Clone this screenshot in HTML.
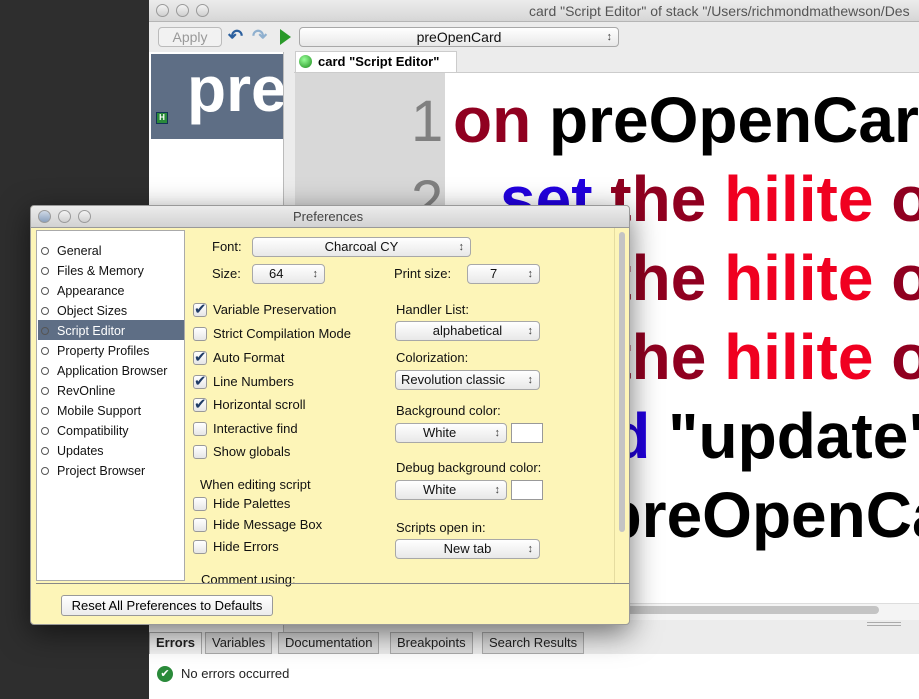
<!DOCTYPE html>
<html><head><style>
*{margin:0;padding:0;box-sizing:border-box}
body{width:919px;height:699px;overflow:hidden;background:#2e2e2e;font-family:"Liberation Sans",sans-serif;font-size:13px;position:relative}
.abs{position:absolute}
.light{width:13px;height:13px;border-radius:50%;border:1px solid #9a9a9a;background:linear-gradient(#f4f4f4,#cfcfcf);position:absolute}
.code{position:absolute;font-weight:bold;font-size:64px;white-space:nowrap;font-family:"Liberation Sans",sans-serif}
.pop{position:absolute;height:20px;border:1px solid #a8a8a8;border-radius:4px;background:linear-gradient(#fff,#e8e8e8);font-size:13px;line-height:18px;text-align:center;color:#111}
.pop:after{content:"\2195";position:absolute;right:6px;top:0;font-size:11px;color:#444}
.cb{position:absolute;width:14px;height:14px;border:1px solid #999;border-radius:3px;background:linear-gradient(#fff,#e6e6e6)}
.cb.on:after{content:"\2714";position:absolute;left:0;top:-4px;font-size:15px;color:#1f3c66}
.lbl{position:absolute;font-size:13px;color:#111;white-space:nowrap}
.li{position:absolute;left:2px;font-size:12.5px;color:#111;white-space:nowrap}
.li:before{content:"";display:inline-block;width:6px;height:6px;border:1px solid #555;border-radius:50%;margin:0 8px 1px 2px;vertical-align:middle}
.tab{position:absolute;top:632px;height:22px;border:1px solid #aaa;background:#dcdcdc;font-size:13px;line-height:20px;padding:0 6px;color:#222}
</style></head><body>
<div class="abs" style="left:149px;top:0;width:770px;height:699px;background:#ececec;overflow:hidden">
 <div class="abs" style="left:0;top:0;width:770px;height:22px;background:linear-gradient(#ececec,#d6d6d6);border-bottom:1px solid #b5b5b5"></div>
 <div class="light" style="left:7px;top:4px"></div><div class="light" style="left:27px;top:4px"></div><div class="light" style="left:47px;top:4px"></div>
 <div class="abs" style="left:380px;top:3px;font-size:14px;color:#555;white-space:nowrap">card "Script Editor" of stack "/Users/richmondmathewson/Des</div>
 <div class="abs" style="left:9px;top:27px;width:64px;height:20px;border:1px solid #bbb;border-radius:4px;background:#f2f2f2;color:#999;text-align:center;line-height:18px;font-size:14px">Apply</div>
 <div class="abs" style="left:79px;top:26px;font-size:18px;color:#2b5f9e;font-weight:bold">&#x21B6;</div>
 <div class="abs" style="left:103px;top:26px;font-size:18px;color:#8fb0cf;font-weight:bold">&#x21B7;</div>
 <div class="abs" style="left:131px;top:29px;width:0;height:0;border-left:11px solid #2a9a2a;border-top:8px solid transparent;border-bottom:8px solid transparent"></div>
 <div class="pop" style="left:150px;top:27px;width:320px;font-size:14px">preOpenCard</div>
 <div class="abs" style="left:0;top:52px;width:135px;height:580px;background:#fff;border-right:1px solid #bbb"></div>
 <div class="abs" style="left:2px;top:54px;width:132px;height:85px;background:#5e6e85;overflow:hidden">
  <div class="abs" style="left:5px;top:58px;width:12px;height:12px;background:#2a8a3a;border:1px solid #135;color:#fff;font-size:8px;font-weight:bold;text-align:center;line-height:10px">H</div>
  <div class="abs" style="left:36px;top:-2px;font-size:64px;font-weight:bold;color:#fff">pre</div>
 </div>
 <div class="abs" style="left:145px;top:51px;width:625px;height:22px;background:#ececec;border-bottom:1px solid #ccc"></div>
 <div class="abs" style="left:146px;top:51px;width:162px;height:22px;background:#fff;border:1px solid #ccc;font-weight:bold;font-size:13px;line-height:20px;padding-left:22px">card "Script Editor"</div>
 <div class="abs" style="left:150px;top:55px;width:13px;height:13px;border-radius:50%;background:radial-gradient(circle at 40% 35%,#9f9,#1a8a1a)"></div>
 <div class="abs" style="left:146px;top:73px;width:150px;height:530px;background:#d8d8d8"></div>
 <div class="abs" style="left:296px;top:73px;width:474px;height:530px;background:#fff"></div>
 <div class="abs" style="left:262px;top:88px;font-size:58px;color:#808080">1</div>
 <div class="abs" style="left:262px;top:168px;font-size:58px;color:#808080">2</div>
 <div class="code" style="left:304px;top:83px"><span style="color:#900020">on</span> <span style="color:#000">preOpenCard</span></div>
 <div class="code" style="left:351px;top:162px"><span style="color:#2200e0">set</span> <span style="color:#900020">the</span> <span style="color:#f00020">hilite</span> <span style="color:#900020">of</span></div>
 <div class="code" style="left:351px;top:241px"><span style="color:#2200e0">set</span> <span style="color:#900020">the</span> <span style="color:#f00020">hilite</span> <span style="color:#900020">of</span></div>
 <div class="code" style="left:351px;top:320px"><span style="color:#2200e0">set</span> <span style="color:#900020">the</span> <span style="color:#f00020">hilite</span> <span style="color:#900020">of</span></div>
 <div class="code" style="left:352px;top:399px"><span style="color:#2200e0">send</span> <span style="color:#000">"update"</span></div>
 <div class="code" style="left:322px;top:478px;color:#000">end preOpenCard</div>
 <div class="abs" style="left:146px;top:603px;width:624px;height:17px;background:#f4f4f4;border-top:1px solid #ddd"></div>
 <div class="abs" style="left:290px;top:606px;width:440px;height:8px;border-radius:4px;background:#c4c4c4"></div>
 <div class="abs" style="left:718px;top:622px;width:34px;height:4px;border-top:1px solid #aaa;border-bottom:1px solid #aaa"></div>
 <div class="abs" style="left:0;top:654px;width:770px;height:45px;background:#fff"></div>
</div>
<div class="tab" style="left:149px;background:#f2f2f2;font-weight:bold;border-bottom:none">Errors</div>
<div class="tab" style="left:205px">Variables</div>
<div class="tab" style="left:278px">Documentation</div>
<div class="tab" style="left:390px">Breakpoints</div>
<div class="tab" style="left:482px">Search Results</div>
<div class="abs" style="left:157px;top:666px;width:16px;height:16px;border-radius:50%;background:#2a8a3a;color:#fff;font-size:11px;text-align:center;line-height:16px">&#x2714;</div>
<div class="abs" style="left:181px;top:666px;font-size:13px;color:#222">No errors occurred</div>
<div class="abs" style="left:30px;top:205px;width:600px;height:420px;background:#fdf5b8;border:1px solid #999;border-radius:4px;box-shadow:0 8px 30px rgba(0,0,0,.55);overflow:hidden">
 <div class="abs" style="left:0;top:0;width:600px;height:22px;background:linear-gradient(#ececec,#d2d2d2);border-bottom:1px solid #999"></div>
 <div class="light" style="left:7px;top:4px;background:linear-gradient(#cfd9e6,#8aa0bd)"></div><div class="light" style="left:27px;top:4px"></div><div class="light" style="left:47px;top:4px"></div>
 <div class="abs" style="left:262px;top:3px;font-size:13px;color:#444">Preferences</div>
 <div class="abs" style="left:5px;top:24px;width:149px;height:351px;background:#fff;border:1px solid #aaa">
  <div class="li" style="top:13px">General</div>
  <div class="li" style="top:33px">Files &amp; Memory</div>
  <div class="li" style="top:53px">Appearance</div>
  <div class="li" style="top:73px">Object Sizes</div>
  <div class="abs" style="left:1px;top:89px;width:146px;height:20px;background:#5e6e85"></div>
  <div class="li" style="top:93px;color:#fff">Script Editor</div>
  <div class="li" style="top:113px">Property Profiles</div>
  <div class="li" style="top:133px">Application Browser</div>
  <div class="li" style="top:153px">RevOnline</div>
  <div class="li" style="top:173px">Mobile Support</div>
  <div class="li" style="top:193px">Compatibility</div>
  <div class="li" style="top:213px">Updates</div>
  <div class="li" style="top:233px">Project Browser</div>
 </div>
 <div class="lbl" style="left:181px;top:33px">Font:</div>
 <div class="pop" style="left:221px;top:31px;width:219px">Charcoal CY</div>
 <div class="lbl" style="left:181px;top:60px">Size:</div>
 <div class="pop" style="left:221px;top:58px;width:73px;text-align:left;padding-left:16px">64</div>
 <div class="lbl" style="left:363px;top:60px">Print size:</div>
 <div class="pop" style="left:436px;top:58px;width:73px;text-align:left;padding-left:22px">7</div>
 <div class="cb on" style="left:162px;top:97px"></div><div class="lbl" style="left:182px;top:96px">Variable Preservation</div>
 <div class="cb" style="left:162px;top:121px"></div><div class="lbl" style="left:182px;top:120px">Strict Compilation Mode</div>
 <div class="cb on" style="left:162px;top:145px"></div><div class="lbl" style="left:182px;top:144px">Auto Format</div>
 <div class="cb on" style="left:162px;top:169px"></div><div class="lbl" style="left:182px;top:168px">Line Numbers</div>
 <div class="cb on" style="left:162px;top:192px"></div><div class="lbl" style="left:182px;top:191px">Horizontal scroll</div>
 <div class="cb" style="left:162px;top:216px"></div><div class="lbl" style="left:182px;top:215px">Interactive find</div>
 <div class="cb" style="left:162px;top:239px"></div><div class="lbl" style="left:182px;top:238px">Show globals</div>
 <div class="lbl" style="left:169px;top:271px">When editing script</div>
 <div class="cb" style="left:162px;top:291px"></div><div class="lbl" style="left:182px;top:290px">Hide Palettes</div>
 <div class="cb" style="left:162px;top:312px"></div><div class="lbl" style="left:182px;top:311px">Hide Message Box</div>
 <div class="cb" style="left:162px;top:334px"></div><div class="lbl" style="left:182px;top:333px">Hide Errors</div>
 <div class="lbl" style="left:170px;top:366px">Comment using:</div>
 <div class="lbl" style="left:365px;top:96px">Handler List:</div>
 <div class="pop" style="left:364px;top:115px;width:145px">alphabetical</div>
 <div class="lbl" style="left:365px;top:144px">Colorization:</div>
 <div class="pop" style="left:364px;top:164px;width:145px;text-align:left;padding-left:5px">Revolution classic</div>
 <div class="lbl" style="left:365px;top:197px">Background color:</div>
 <div class="pop" style="left:364px;top:217px;width:112px;text-align:left;padding-left:27px">White</div>
 <div class="abs" style="left:480px;top:217px;width:32px;height:20px;background:#fff;border:1px solid #999"></div>
 <div class="lbl" style="left:365px;top:254px">Debug background color:</div>
 <div class="pop" style="left:364px;top:274px;width:112px;text-align:left;padding-left:27px">White</div>
 <div class="abs" style="left:480px;top:274px;width:32px;height:20px;background:#fff;border:1px solid #999"></div>
 <div class="lbl" style="left:365px;top:314px">Scripts open in:</div>
 <div class="pop" style="left:364px;top:333px;width:145px">New tab</div>
 <div class="abs" style="left:583px;top:22px;width:16px;height:355px;background:#fdf5b8;border-left:1px solid #e5dca0"></div>
 <div class="abs" style="left:588px;top:26px;width:6px;height:300px;border-radius:3px;background:#c4c4c4"></div>
 <div class="abs" style="left:5px;top:377px;width:595px;height:1px;background:#888"></div>
 <div class="abs" style="left:30px;top:389px;width:212px;height:21px;border:1px solid #999;border-radius:3px;background:linear-gradient(#fff,#ececec);font-size:13px;line-height:19px;text-align:center">Reset All Preferences to Defaults</div>
</div>
</body></html>
